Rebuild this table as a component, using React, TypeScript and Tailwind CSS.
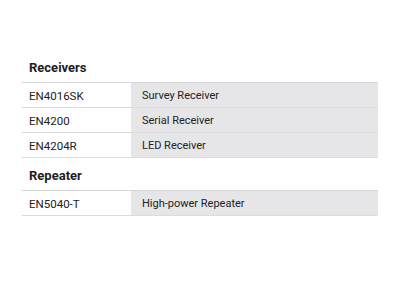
import React from "react";

const groups = [
  { title: "Receivers", rows: [["EN4016SK", "Survey Receiver"], ["EN4200", "Serial Receiver"], ["EN4204R", "LED Receiver"]] },
  { title: "Repeater", rows: [["EN5040-T", "High-power Repeater"]] },
];

export default function App() {
  return (
    <div className="w-[400px] h-[300px] bg-white pt-[50px] px-[22px]" style={{ fontFamily: "Roboto, 'Liberation Sans', sans-serif" }}>
      {groups.map((g) => (
        <div key={g.title}>
          <div className="h-[32px] flex items-center pl-[7px] pt-[3px] text-[13px] font-bold text-[#1e1e23]">{g.title}</div>
          <div className="border-t-[1.5px] border-[#d6d6d8]">
            {g.rows.map(([a, b]) => (
              <div key={a} className="flex h-[25px] border-b-[1.5px] border-[#dcdcde]">
                <div className="w-[109px] pl-[7px] pt-[3px] flex items-center text-[11.5px] text-[#222]">{a}</div>
                <div className="flex-1 bg-[#e6e6e8] pl-[11px] pt-[3px] flex items-center text-[11px] text-[#222]">{b}</div>
              </div>
            ))}
          </div>
        </div>
      ))}
    </div>
  );
}
